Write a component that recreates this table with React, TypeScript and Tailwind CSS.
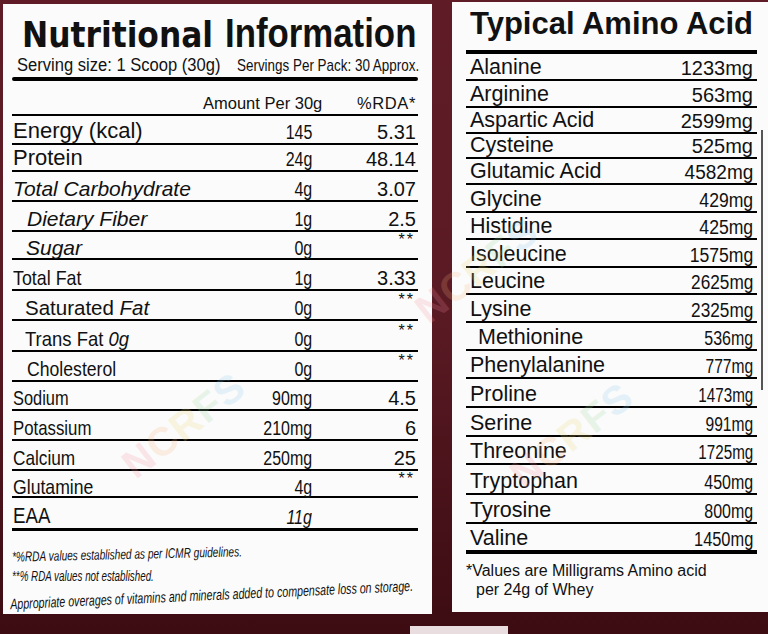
import type { ReactNode } from "react"

type Row = { h: string; name: ReactNode; amt: ReactNode; rda: string }

// condensed text: scaled inline-block
const Sq = ({ cls, children }: { cls: string; children: ReactNode }) => (
    <span className={`inline-block whitespace-nowrap ${cls}`}>{children}</span>
)

const nutrition: Row[] = [
    { h: "h-[29px]", name: <span className="text-[22px]">Energy (kcal)</span>, amt: "145", rda: "5.31" },
    { h: "h-[27px]", name: <span className="text-[22px]">Protein</span>, amt: "24g", rda: "48.14" },
    { h: "h-[30px]", name: <i className="text-[21px]">Total Carbohydrate</i>, amt: "4g", rda: "3.07" },
    { h: "h-[30px]", name: <i className="pl-[14px] text-[21px]">Dietary Fiber</i>, amt: "1g", rda: "2.5" },
    { h: "h-[28px]", name: <i className="pl-[13px] text-[21px]">Sugar</i>, amt: "0g", rda: "**" },
    { h: "h-[31px]", name: <Sq cls="origin-left scale-x-[0.85] text-[21px]">Total Fat</Sq>, amt: "1g", rda: "3.33" },
    { h: "h-[30px]", name: <span className="pl-[12px] text-[20.5px]">Saturated <i>Fat</i></span>, amt: "0g", rda: "**" },
    { h: "h-[31px]", name: <span className="pl-[12px]"><Sq cls="origin-left scale-x-[0.88] text-[21px]">Trans Fat <i>0g</i></Sq></span>, amt: "0g", rda: "**" },
    { h: "h-[30px]", name: <span className="pl-[14px]"><Sq cls="origin-left scale-x-[0.84] text-[21px]">Cholesterol</Sq></span>, amt: "0g", rda: "**" },
    { h: "h-[29px]", name: <Sq cls="origin-left scale-x-[0.78] text-[21px]">Sodium</Sq>, amt: "90mg", rda: "4.5" },
    { h: "h-[30px]", name: <Sq cls="origin-left scale-x-[0.8] text-[21px]">Potassium</Sq>, amt: "210mg", rda: "6" },
    { h: "h-[30px]", name: <Sq cls="origin-left scale-x-[0.82] text-[21px]">Calcium</Sq>, amt: "250mg", rda: "25" },
    { h: "h-[27px]", name: <Sq cls="origin-left scale-x-[0.84] text-[21px]">Glutamine</Sq>, amt: "4g", rda: "**" },
    { h: "h-[33px]", name: <Sq cls="origin-left scale-x-[0.85] text-[22px]">EAA</Sq>, amt: <i>11g</i>, rda: "" },
]

const aminos = [
    { h: "h-[27px]", name: "Alanine", v: "1233mg", s: "scale-x-100" },
    { h: "h-[27px]", name: "Arginine", v: "563mg", s: "scale-x-100" },
    { h: "h-[26px]", name: "Aspartic Acid", v: "2599mg", s: "scale-x-100" },
    { h: "h-[25px]", name: "Cysteine", v: "525mg", s: "scale-x-100" },
    { h: "h-[26px]", name: "Glutamic Acid", v: "4582mg", s: "scale-x-[0.95]" },
    { h: "h-[28px]", name: "Glycine", v: "429mg", s: "scale-x-[0.88]" },
    { h: "h-[27px]", name: "Histidine", v: "425mg", s: "scale-x-[0.88]" },
    { h: "h-[28px]", name: "Isoleucine", v: "1575mg", s: "scale-x-[0.88]" },
    { h: "h-[27px]", name: "Leucine", v: "2625mg", s: "scale-x-[0.86]" },
    { h: "h-[28px]", name: "Lysine", v: "2325mg", s: "scale-x-[0.86]" },
    { h: "h-[28px]", name: "Methionine", v: "536mg", s: "scale-x-[0.8]", pad: "pl-[8px]" },
    { h: "h-[28px]", name: "Phenylalanine", v: "777mg", s: "scale-x-[0.78]" },
    { h: "h-[29px]", name: "Proline", v: "1473mg", s: "scale-x-[0.76]" },
    { h: "h-[29px]", name: "Serine", v: "991mg", s: "scale-x-[0.78]" },
    { h: "h-[28px]", name: "Threonine", v: "1725mg", s: "scale-x-[0.76]" },
    { h: "h-[30px]", name: "Tryptophan", v: "450mg", s: "scale-x-[0.8]" },
    { h: "h-[29px]", name: "Tyrosine", v: "800mg", s: "scale-x-[0.8]" },
    { h: "h-[30px]", name: "Valine", v: "1450mg", s: "scale-x-[0.82]" },
]

function Watermark({ pos }: { pos: string }) {
    return (
        <div className={`pointer-events-none absolute -rotate-[38deg] text-[40px] font-bold tracking-wide opacity-20 ${pos}`}>
            <span className="text-[#f48fa0]">N</span>
            <span className="text-[#f8b27a]">C</span>
            <span className="text-[#e8d870]">R</span>
            <span className="text-[#9ed8a0]">F</span>
            <span className="text-[#8cc8e8]">S</span>
        </div>
    )
}

export default function App() {
    return (
        <div className="relative h-[634px] w-[768px] overflow-hidden bg-gradient-to-b from-[#5f1c26] via-[#5a1a24] to-[#3c0c12] font-['Liberation_Sans',Arial,sans-serif] text-[#111]">
            <div className="flex items-start">
                {/* left label */}
                <div className="ml-[3px] mt-[4px] h-[610px] w-[429px] bg-[#fbfbfb] pl-[9px]">
                    <div className="w-[406px]">
                        <div className="mt-[9px] flex items-baseline leading-none">
                            <span className="inline-block w-[213px] whitespace-nowrap pl-[10px]">
                                <Sq cls="origin-left scale-x-[0.87] font-['DejaVu_Sans'] text-[36px] font-bold">Nutritional</Sq>
                            </span>
                            <Sq cls="origin-left scale-x-[0.87] text-[40px] font-bold">Information</Sq>
                        </div>
                        <div className="mt-[3px] flex items-baseline leading-none">
                            <span className="inline-block w-[225px] pl-[5px]">
                                <Sq cls="origin-left scale-x-[0.92] text-[18px]">Serving size: 1 Scoop (30g)</Sq>
                            </span>
                            <Sq cls="origin-left scale-x-[0.79] text-[17px]">Servings Per Pack: 30 Approx.</Sq>
                        </div>
                        <div className="mt-[3px] h-[4px] rounded-full bg-black" />
                        <div className="mt-[14px] flex h-[21px] items-start border-b-2 border-black text-[16.5px] leading-none">
                            <span className="ml-[191px]">Amount Per 30g</span>
                            <span className="ml-auto mr-[2px] tracking-[0.6px]">%RDA*</span>
                        </div>
                        {nutrition.map((r, i) => (
                            <div
                                key={i}
                                className={`grid grid-cols-[1fr_100px_106px] items-end border-b-2 border-black pb-[1px] text-[20px] leading-none ${r.h} ${i === nutrition.length - 1 ? "border-b-[3px]" : ""}`}
                            >
                                <div className="whitespace-nowrap pl-[1px]">{r.name}</div>
                                <div className="text-right">
                                    <Sq cls="origin-right scale-x-[0.8]">{r.amt}</Sq>
                                </div>
                                {r.rda === "**" ? (
                                    <div className="mb-[10px] pr-[3px] text-right text-[16px] tracking-[2px]">**</div>
                                ) : (
                                    <div className="pr-[2px] text-right">{r.rda}</div>
                                )}
                            </div>
                        ))}
                        <div className="italic leading-none">
                            <div className="mt-[13px] -rotate-[1.3deg]">
                                <Sq cls="origin-left scale-x-[0.72] text-[14px]">*%RDA values established as per ICMR guidelines.</Sq>
                            </div>
                            <div className="mt-[8px]">
                                <Sq cls="origin-left scale-x-[0.7] text-[14px]">**% RDA values not established.</Sq>
                            </div>
                            <div className="-ml-[2px] mt-[3px] -rotate-[2.6deg]">
                                <Sq cls="origin-left scale-x-[0.71] text-[15px]">Appropriate overages of vitamins and minerals added to compensate loss on storage.</Sq>
                            </div>
                        </div>
                    </div>
                </div>

                {/* right label */}
                <div className="relative ml-[20px] mt-[2px] h-[610px] w-[316px] bg-[#fbfbfb] pl-[14px]">
                    <div className="absolute right-[5px] top-[128px] h-[260px] w-[2px] bg-[#555]" />
                    <div className="w-[291px]">
                        <div className="mt-[6px] pl-[4px] text-[31px] font-bold leading-none">Typical Amino Acid</div>
                        <div className="mt-[11px] h-[4px] bg-black" />
                        {aminos.map((a, i) => (
                            <div
                                key={a.name}
                                className={`flex items-end justify-between pb-[1px] pl-[4px] pr-[4px] text-[21.5px] leading-none ${a.h} ${i === aminos.length - 1 ? "border-b-4" : "border-b-2"} border-black`}
                            >
                                <span className={a.pad ?? ""}>{a.name}</span>
                                <Sq cls={`origin-right text-[20px] ${a.s}`}>{a.v}</Sq>
                            </div>
                        ))}
                        <div className="mt-[7px] text-[16px] leading-[19px]">
                            <div>*Values are Milligrams Amino acid</div>
                            <div className="pl-[10px]">per 24g of Whey</div>
                        </div>
                    </div>
                </div>
            </div>

            <div className="absolute bottom-0 left-[410px] h-[8px] w-[98px] bg-[#eadde0]" />

            <Watermark pos="left-[112px] top-[395px]" />
            <Watermark pos="left-[405px] top-[240px]" />
            <Watermark pos="left-[500px] top-[405px]" />
        </div>
    )
}
